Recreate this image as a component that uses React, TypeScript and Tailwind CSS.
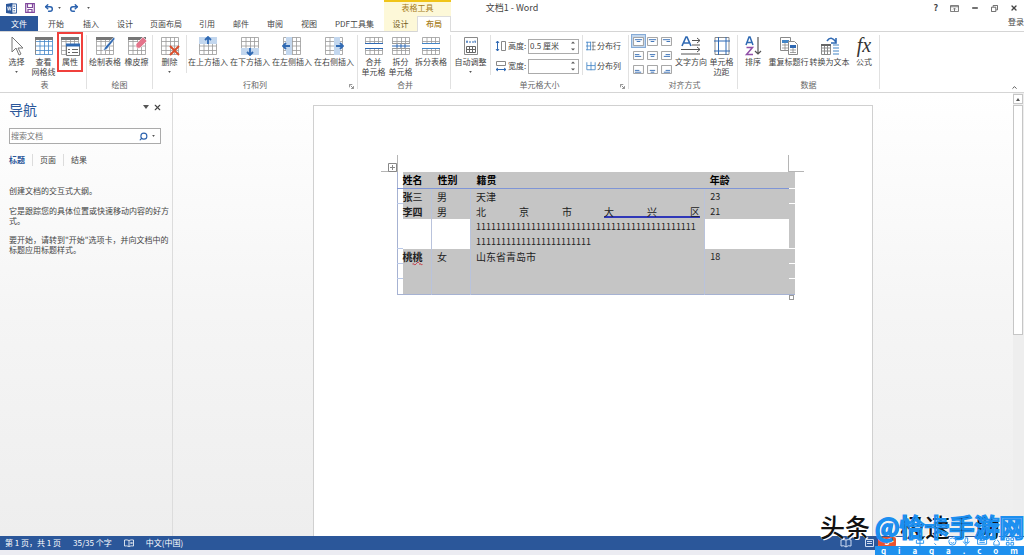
import React from 'react'
import { ChevronUp, Minus, Redo2, Search, Undo2, X } from 'lucide-react'

interface IconProps {
	children?: React.ReactNode
}

const Icon: React.FC<IconProps> = ({ children }) => (
	<svg viewBox="0 0 20 20" className="h-5 w-5 shrink-0" fill="none" stroke="#8a8a8a" aria-hidden="true">
		{children}
	</svg>
)

// Plain 4x4 table outline shared by most of the ribbon icons.
const Cells: React.FC<{ stroke?: string }> = ({ stroke = '#999' }) => (
	<path d="M1.5 1.5h17v17h-17zM1.5 5.5h17M1.5 10h17M1.5 14.5h17M6 1.5v17M10.5 1.5v17M14.5 1.5v17" stroke={stroke} strokeWidth=".8" />
)

const Header: React.FC = () => <path d="M1 1h18v3H1z" fill="#777" stroke="none" />

interface RibbonButtonProps {
	lines: string[]
	width: string
	icon: React.ReactNode
	menu?: boolean
	highlighted?: boolean
}

const RibbonButton: React.FC<RibbonButtonProps> = ({ lines, width, icon, menu, highlighted }) => (
	<button type="button" className={`relative flex h-[46px] flex-col items-center pt-px ${width}`}>
		{icon}
		<span className="mt-px text-[8px] leading-[10px] whitespace-nowrap">
			{lines.map((line) => (
				<span key={line} className="block">{line}</span>
			))}
		</span>
		{menu && <Caret className="mt-1" />}
		{highlighted && <span className="absolute -top-[3px] left-0 h-10 w-[26px] border-2 border-[#f0403c]" />}
	</button>
)

const Caret: React.FC<{ className?: string }> = ({ className = '' }) => (
	<svg viewBox="0 0 4 3" className={`h-[2px] w-[3px] shrink-0 ${className}`} aria-hidden="true">
		<path d="M0 0h4L2 3z" fill="#555" />
	</svg>
)

interface GroupProps {
	label: string
	width: string
	launcher?: boolean
	children: React.ReactNode
}

const Group: React.FC<GroupProps> = ({ label, width, launcher, children }) => (
	<section className={`relative my-[3px] flex shrink-0 flex-col border-r border-[#e1e1e1] ${width}`}>
		<div className="flex h-[45px] items-start">{children}</div>
		<h2 className="text-center text-[8px] leading-[10px] text-[#666]">{label}</h2>
		{launcher && (
			<svg viewBox="0 0 6 6" className="absolute right-[3px] bottom-0 h-[5px] w-[5px]" fill="none" stroke="#777" aria-hidden="true">
				<path d="M.5 4V.5H4M2 2l3 3M5.5 2.5v3h-3" />
			</svg>
		)}
	</section>
)

const Arrow: React.FC<{ d: string }> = ({ d }) => <path d={d} stroke="#2f69b3" strokeWidth="1.8" />

const alignments = [
	['M2 3h8M4 5h4', 'M2 3h8M4 5h4', 'M2 3h8M6 5h4'],
	['M2 4h5M2 6h7', 'M3 4h6M4 6h4', 'M5 4h5M3 6h7'],
	['M2 6h5M2 8h7', 'M3 6h6M4 8h4', 'M5 6h5M3 8h7'],
]

const DimensionField: React.FC<{ id: string; label: string; value: string; vertical?: boolean }> = ({ id, label, value, vertical }) => (
	<div className="flex h-5 items-center">
		<svg viewBox="0 0 12 12" className="mr-px h-3 w-3" fill="none" aria-hidden="true">
			{vertical ? (
				<>
					<path d="M2.5 1v10M1 3l1.5-2L4 3M1 9l1.5 2L4 9" stroke="#2f69b3" />
					<path d="M6.5 1.5h4v9h-4z" stroke="#888" />
				</>
			) : (
				<>
					<path d="M1 9.5h10M3 8L1 9.5 3 11M9 8l2 1.5L9 11" stroke="#2f69b3" />
					<path d="M1.5 1.5h9v4h-9z" stroke="#888" />
				</>
			)}
		</svg>
		<label htmlFor={id} className="w-5 text-[8px]">{label}</label>
		<div className="flex h-[15px] w-[51px] items-center border border-[#ababab] bg-white">
			<input id={id} defaultValue={value} className="min-w-0 flex-1 pl-px text-[8px] leading-3 outline-none" />
			<svg viewBox="0 0 4 10" className="mr-[3px] h-[10px] w-1" fill="#555" aria-hidden="true">
				<path d="M0 2.5L2 .5l2 2zM0 7.5l2 2 2-2z" />
			</svg>
		</div>
	</div>
)

const Ribbon: React.FC = () => (
	<div className="flex h-[62px] overflow-hidden border-y border-[#d5d5d5] bg-white">
		<Group label="表" width="w-[87px] pl-[3px]">
			<RibbonButton lines={['选择']} width="w-[27px]" menu icon={<Icon><path d="M5 1v15l4-4 3 7 2-1-3-6h5z" stroke="#777" /></Icon>} />
			<RibbonButton
				lines={['查看', '网格线']}
				width="w-[27px]"
				icon={<Icon><Cells stroke="#4385c6" /><path d="M1.5 18.5v-17h17" stroke="#888" /><path d="M1 1h18v3H1z" fill="#777" stroke="none" /></Icon>}
			/>
			<RibbonButton
				lines={['属性']}
				width="w-[26px]"
				highlighted
				icon={
					<Icon>
						<Cells /><Header />
						<path d="M6.5 8.5h13v11h-13z" fill="#fff" stroke="#777" />
						<path d="M6 7.5h14v3H6z" fill="#2f69b3" stroke="none" />
						<path d="M8 13.5h2M8 16.5h2M12 13.5h6M12 16.5h6" stroke="#666" />
					</Icon>
				}
			/>
		</Group>
		<Group label="绘图" width="w-[66px]">
			<RibbonButton
				lines={['绘制表格']}
				width="w-9"
				icon={<Icon><Cells /><Header /><path d="M19 1L10 11l-2 4 4-2 8-10z" fill="#2f69b3" stroke="#fff" strokeWidth=".6" /></Icon>}
			/>
			<RibbonButton
				lines={['橡皮擦']}
				width="w-[27px]"
				icon={<Icon><Cells /><Header /><path d="M9 8l7-7 4 4-7 7q-2 1-4-1z" fill="#e4748b" stroke="#fff" strokeWidth=".6" /></Icon>}
			/>
		</Group>
		<Group label="行和列" width="w-[205px]" launcher>
			<RibbonButton
				lines={['删除']}
				width="w-[33px]"
				menu
				icon={<Icon><Cells /><path d="M10 10l9 9M19 10l-9 9" stroke="#d9502e" strokeWidth="2" /></Icon>}
			/>
			<span className="h-[38px] border-l border-[#e1e1e1]" />
			<RibbonButton lines={['在上方插入']} width="w-[42px]" icon={<Icon><Cells /><path d="M1 1h18v7H1z" fill="#c3d7ee" stroke="none" /><Arrow d="M10 8V1M7 4l3-3 3 3" /></Icon>} />
			<RibbonButton lines={['在下方插入']} width="w-[42px]" icon={<Icon><Cells /><path d="M1 12h18v7H1z" fill="#c3d7ee" stroke="none" /><Arrow d="M10 12v7M7 16l3 3 3-3" /></Icon>} />
			<RibbonButton lines={['在左侧插入']} width="w-[42px]" icon={<Icon><Cells /><path d="M4 1h6v18H4z" fill="#c3d7ee" stroke="none" /><Arrow d="M8 10H1M4 7l-3 3 3 3" /></Icon>} />
			<RibbonButton lines={['在右侧插入']} width="w-[42px]" icon={<Icon><Cells /><path d="M10 1h6v18h-6z" fill="#c3d7ee" stroke="none" /><Arrow d="M12 10h7M16 7l3 3-3 3" /></Icon>} />
		</Group>
		<Group label="合并" width="w-[93px] pl-[2px]">
			<RibbonButton lines={['合并', '单元格']} width="w-[27px]" icon={<Icon><Cells /><path d="M0 7h20v6H0z" fill="#fff" stroke="none" /><path d="M1 7.5h18M1 12.5h18" stroke="#2f69b3" /></Icon>} />
			<RibbonButton lines={['拆分', '单元格']} width="w-[27px]" icon={<Icon><Cells /><path d="M1 7h18v6H1z" fill="#fff" stroke="none" /><path d="M1 7.5h18M1 12.5h18" stroke="#999" /><path d="M1 10h18M6 8v4M10 8v4M14 8v4" stroke="#2f69b3" /></Icon>} />
			<RibbonButton lines={['拆分表格']} width="w-[34px]" icon={<Icon><Cells /><path d="M0 8h20v4H0z" fill="#fff" stroke="none" /><path d="M1 7.5h18M1 12.5h18" stroke="#4385c6" /></Icon>} />
		</Group>
		<Group label="单元格大小" width="w-[178px]" launcher>
			<RibbonButton
				lines={['自动调整']}
				width="w-[39px]"
				menu
				icon={
					<Icon>
						<path d="M3.5 1.5h13v17h-13z" />
						<path d="M5 6h10M6 4.5v3M14 4.5v3" stroke="#2f69b3" strokeDasharray="2 1" />
						<path d="M5.5 10.5h9v6h-9zM5.5 13.5h9M8.5 10v6M11.5 10v6" stroke="#666" />
					</Icon>
				}
			/>
			<span className="h-10 border-l border-[#e1e1e1]" />
			<div className="ml-1 pt-px">
				<DimensionField id="row-height" label="高度:" value="0.5 厘米" vertical />
				<DimensionField id="column-width" label="宽度:" value="" />
			</div>
			<span className="ml-[3px] h-10 border-l border-[#e1e1e1]" />
			<div className="ml-[3px] pt-px">
				{['分布行', '分布列'].map((label) => (
					<button key={label} type="button" className="flex h-5 items-center gap-px text-[8px] whitespace-nowrap">
						<svg viewBox="0 0 12 12" className="h-[10px] w-[10px]" fill="none" stroke="#4385c6" aria-hidden="true">
							<path d={label === '分布行' ? 'M1.5 1v10M5.5 1v10M0 1.5h6M0 6h6M0 10.5h6' : 'M1 1.5v4h10v-4M6 1v10M1 5.5v5h10v-5'} />
							<path d="M8.5 1v10M7 1.5h4.5M7 6h4.5M7 10.5h4.5" stroke={label === '分布行' ? '#777' : 'none'} />
						</svg>
						{label}
					</button>
				))}
			</div>
		</Group>
		<Group label="对齐方式" width="w-[109px] pl-[3px]">
			<div className="grid w-[42px] grid-cols-3 gap-y-[2px]">
				{alignments.flat().map((d, index) => (
					<button
						key={index}
						type="button"
						aria-label={`对齐 ${index + 1}`}
						className={`flex h-3 w-[13px] items-center justify-center ${index === 0 ? 'bg-[#c3d7ee] outline outline-[#86abd6]' : ''}`}
					>
						<svg viewBox="0 0 12 10" className="h-[9px] w-[11px]" fill="#fff" aria-hidden="true">
							<path d="M.5.5h11v9H.5z" stroke="#999" />
							<path d={d} stroke="#2f69b3" />
						</svg>
					</button>
				))}
			</div>
			<RibbonButton
				lines={['文字方向']}
				width="w-[34px]"
				icon={
					<Icon>
						<path d="M1 10L5 1h1l4 9M3 7h5" stroke="#2f69b3" strokeWidth="1.6" />
						<path d="M11 4.5h8M11 9h8M0 13.5h19M0 18h19M16 2l3 2.5L16 7M16 11l3 2.5-3 2.5" stroke="#555" />
					</Icon>
				}
			/>
			<RibbonButton
				lines={['单元格', '边距']}
				width="w-[27px]"
				icon={<Icon><path d="M3 1.5h14v17H3z" /><path d="M6.5 1v18M14 1v18M2 5h16M2 15h16" stroke="#2f69b3" /></Icon>}
			/>
		</Group>
		<Group label="数据" width="w-[142px]">
			<RibbonButton
				lines={['排序']}
				width="w-[30px]"
				icon={
					<Icon>
						<path d="M3 9l3-8h1l3 8M4 6.5h5" stroke="#2f69b3" strokeWidth="1.5" />
						<path d="M3.5 11.5h6l-6 7h6.5" stroke="#9150a8" strokeWidth="1.5" />
						<path d="M15 1v17M12 15l3 3 3-3" stroke="#555" strokeWidth="1.2" />
					</Icon>
				}
			/>
			<RibbonButton
				lines={['重复标题行']}
				width="w-[41px]"
				icon={
					<Icon>
						<path d="M1.5 1.5h10v13h-10z" fill="#fff" />
						<path d="M3 4h7v3H3z" fill="#4385c6" stroke="none" />
						<path d="M3 9h6M3 12h6M6 7v7" strokeWidth=".8" />
						<path d="M9.5 5.5h6l3 3v10h-9z" fill="#fff" />
						<path d="M11 9h6v3h-6z" fill="#2f69b3" stroke="none" />
						<path d="M11 14h6M11 16.5h6M14 12v5" strokeWidth=".8" />
					</Icon>
				}
			/>
			<RibbonButton
				lines={['转换为文本']}
				width="w-[41px]"
				icon={
					<Icon>
						<path d="M1.5 8.5h9v10h-9zM1 12h10M1 15h10M4.5 9v9M7.5 9v9" />
						<path d="M1 8h10v2H1z" fill="#666" stroke="none" />
						<path d="M13 9h6M13 12h6M13 15h6M13 18h6" stroke="#4385c6" />
						<path d="M7 5q4-6 9 1M16 2v5h-5" stroke="#2f69b3" strokeWidth="1.6" />
					</Icon>
				}
			/>
			<RibbonButton
				lines={['公式']}
				width="w-[28px]"
				icon={<span className="h-5 font-['Liberation_Serif',serif] text-[20px] leading-[18px] text-[#333] italic">fx</span>}
			/>
		</Group>
		<button type="button" aria-label="折叠功能区" className="mr-[6px] mb-px ml-auto self-end">
			<ChevronUp className="h-[7px] w-[7px]" strokeWidth={3} />
		</button>
	</div>
)

const TitleBar: React.FC = () => (
	<header className="flex h-4 items-center text-[#444]">
		<div className="flex flex-1 items-center pl-[6px]">
			<svg viewBox="0 0 12 12" className="h-[11px] w-[11px]" aria-hidden="true">
				<path d="M5 1h6.5v10H5z" fill="#fff" stroke="#2b579a" />
				<path d="M0 1l7-1v12l-7-1z" fill="#2b579a" />
				<path d="M1.5 4l1 4 1-4 1 4 1-4" stroke="#fff" strokeWidth=".8" fill="none" />
				<path d="M8 3.5h2M8 6h2M8 8.5h2" stroke="#2b579a" />
			</svg>
			<button type="button" aria-label="保存" className="ml-2">
				<svg viewBox="0 0 10 10" className="h-[10px] w-[10px]" fill="none" stroke="#80479c" strokeWidth="1.2" aria-hidden="true">
					<path d="M.7.7h8.6v8.6H.7zM2.5 1v3.5h5V1M3 9V6.5h4V9" />
				</svg>
			</button>
			<button type="button" aria-label="撤消" className="ml-[9px] flex items-center gap-1">
				<Undo2 className="h-[10px] w-[10px] text-[#2b62ae]" strokeWidth={3.5} />
				<Caret />
			</button>
			<button type="button" aria-label="恢复" className="ml-2">
				<Redo2 className="h-[10px] w-[10px] text-[#2b62ae]" strokeWidth={3.5} />
			</button>
			<Caret className="ml-2" />
		</div>
		<h1 className="text-[9px]">文档1 - Word</h1>
		<div className="flex flex-1 items-center justify-end gap-3 pr-[6px]">
			<button type="button" aria-label="帮助" className="text-[9px] font-bold">?</button>
			<button type="button" aria-label="功能区显示选项">
				<svg viewBox="0 0 10 8" className="h-[7px] w-[9px]" fill="none" stroke="#666" aria-hidden="true">
					<path d="M.5.5h9v7h-9zM0 2h10M5 7V4M3.5 5L5 3.5 6.5 5" />
				</svg>
			</button>
			<button type="button" aria-label="最小化"><Minus className="h-[8px] w-[8px]" strokeWidth={4} /></button>
			<button type="button" aria-label="还原">
				<svg viewBox="0 0 8 8" className="h-[7px] w-[7px]" fill="none" stroke="#555" aria-hidden="true">
					<path d="M.5 2.5h5v5h-5zM2.5 2V.5h5v5H6" />
				</svg>
			</button>
			<button type="button" aria-label="关闭"><X className="h-[8px] w-[8px]" strokeWidth={4} /></button>
		</div>
	</header>
)

const tabs = [
	{ label: '开始', width: 'w-9' },
	{ label: '插入', width: 'w-[34px]' },
	{ label: '设计', width: 'w-[34px]' },
	{ label: '页面布局', width: 'w-[48px]' },
	{ label: '引用', width: 'w-[34px]' },
	{ label: '邮件', width: 'w-[34px]' },
	{ label: '审阅', width: 'w-[34px]' },
	{ label: '视图', width: 'w-[34px]' },
	{ label: 'PDF工具集', width: 'w-[58px] pr-px' },
]

const TabBar: React.FC = () => (
	<nav className="relative flex h-[15px] text-[8px] leading-[15px]">
		<button type="button" className="w-[38px] bg-[#2b579a] text-white">文件</button>
		{tabs.map((tab) => (
			<button key={tab.label} type="button" className={`whitespace-nowrap ${tab.width}`}>{tab.label}</button>
		))}
		<div className="relative flex w-[67px] bg-[#fdf8d8]">
			<span className="absolute inset-x-0 -top-4 h-4 border-t-2 border-[#f0c419] bg-[#fdf8d8] text-center leading-[12px] text-[#a67c17]">
				表格工具
			</span>
			<button type="button" className="w-[33px] text-[#725a1c]">设计</button>
			<button type="button" className="relative -mb-px flex h-4 w-[34px] justify-center border-x border-t border-[#dcdcdc] bg-white leading-[13px] font-medium text-[#a67c17]">布局</button>
		</div>
		<a href="#login" className="ml-auto leading-3">登录</a>
	</nav>
)

const NavigationPane: React.FC = () => (
	<aside className="w-[173px] shrink-0 border-r border-[#dcdcdc] pt-2 pr-[11px] pl-[9px] text-[8px] text-[#444]">
		<div className="flex h-4 items-start">
			<h2 className="flex-1 text-[14px] leading-[16px] text-[#2b579a]">导航</h2>
			<button type="button" aria-label="任务窗格选项" className="mt-1 mr-1">
				<svg viewBox="0 0 6 4" className="h-1 w-[6px]" aria-hidden="true"><path d="M0 0h6L3 4z" fill="#555" /></svg>
			</button>
			<button type="button" aria-label="关闭导航" className="-mr-px"><X className="mt-[2px] h-[9px] w-[9px]" strokeWidth={3} /></button>
		</div>
		<div className="mt-[11px] flex h-4 items-center border border-[#ababab] bg-white pr-px">
			<input aria-label="搜索文档" placeholder="搜索文档" className="min-w-0 flex-1 pl-px leading-3 outline-none placeholder:text-[#777]" />
			<Search className="h-[9px] w-[9px] -scale-x-100 text-[#2b62ae]" strokeWidth={3} />
			<Caret className="mx-1" />
		</div>
		<div className="mt-[10px] flex h-3 items-center">
			<button type="button" className="pr-[7px] font-bold text-[#2b579a]">标题</button>
			<button type="button" className="border-l border-[#dcdcdc] px-[7px]">页面</button>
			<button type="button" className="border-l border-[#dcdcdc] px-[7px]">结果</button>
		</div>
		<p className="mt-5 leading-[10px]">创建文档的交互式大纲。</p>
		<p className="-mr-[10px] mt-[10px] leading-[10px]">它是跟踪您的具体位置或快速移动内容的好方<br />式。</p>
		<p className="-mr-[10px] mt-[9px] leading-[10px]">要开始，请转到"开始"选项卡，并向文档中的<br />标题应用标题样式。</p>
	</aside>
)

interface Person {
	name: React.ReactNode
	gender: string
	origin: React.ReactNode
	age: string
}

const longOrigin = (
	<>
		<div className="flex h-[15px] w-56 justify-between">
			<span className="flex gap-[33px]"><span>北</span><span>京</span><span>市</span></span>
			<span className="flex h-[14px] gap-[33px] border-b-2 border-[#3038b8]"><span>大</span><span>兴</span><span>区</span></span>
		</div>
		<div className="text-[9px]">{'1'.repeat(44)}</div>
		<div className="text-[9px]">{'1'.repeat(23)}</div>
	</>
)

const people: Person[] = [
	{ name: <><b>张</b>三</>, gender: '男', origin: '天津', age: '23' },
	{ name: <b>李四</b>, gender: '男', origin: longOrigin, age: '21' },
	{ name: <b>桃<u className="decoration-[#c22f3d] decoration-wavy decoration-1 underline-offset-0">桃</u></b>, gender: '女', origin: '山东省青岛市', age: '18' },
	{ name: '', gender: '', origin: '', age: '' },
	{ name: '', gender: '', origin: '', age: '' },
]

const cell = 'h-[15px] bg-[#c5c5c5] pl-[5px]'

const PeopleTable: React.FC = () => (
	<div className="relative mt-[66px] ml-[83px] w-[398px]">
		<span className="absolute -top-[17px] left-0 h-[17px] border-l border-[#b5b5b5]" />
		<span className="absolute -top-px -left-4 w-4 border-t border-[#b5b5b5]" />
		<svg viewBox="0 0 9 9" className="absolute -top-[9px] -left-[9px] h-[9px] w-[9px]" fill="#fff" stroke="#888" aria-hidden="true">
			<path d="M.5.5h8v8h-8zM4.5 2v5M2 4.5h5" />
		</svg>
		<span className="absolute -top-[17px] left-[391px] h-[17px] border-l border-[#b5b5b5]" />
		<span className="absolute -top-px left-[391px] w-4 border-t border-[#b5b5b5]" />
		<table className="w-full table-fixed border-b border-l border-[#a6b2d2] text-left text-[10px] leading-[15px] text-[#222]">
			<colgroup>
				<col className="w-[5px]" />
				<col className="w-[29px]" />
				<col className="w-[39px]" />
				<col className="w-[234px]" />
				<col className="w-[84px]" />
				<col className="w-[6px]" />
			</colgroup>
			<thead>
				<tr className="h-4 bg-[#c5c5c5] text-black">
					<th className="border-b border-[#7f95d6] bg-white" />
					<th className="border-b border-[#7f95d6] p-0 font-bold">姓名</th>
					<th className="border-b border-[#7f95d6] p-0 pl-[6px] font-bold">性别</th>
					<th className="border-b border-[#7f95d6] p-0 pl-[6px] font-bold">籍贯</th>
					<th className="border-b border-[#7f95d6] p-0 pl-[5px] font-bold">年龄</th>
					<th className="border-b border-white" />
				</tr>
			</thead>
			<tbody>
				{people.map((person, index) => (
					<tr key={index} className="align-top">
						<td className="border-t border-[#b9c8e8]" />
						<td className="p-0"><div className="h-[15px] bg-[#c5c5c5]">{person.name}</div></td>
						<td className="border-l border-[#b9c3dc] p-0"><div className={cell}>{person.gender}</div></td>
						<td className="border-l border-[#b9c3dc] bg-[#c5c5c5] p-0 pl-[5px]">{person.origin}</td>
						<td className="border-l border-[#b9c3dc] p-0"><div className={`${cell} text-[9px]`}>{person.age}</div></td>
						<td className="border-t border-white bg-[#c5c5c5]" />
					</tr>
				))}
			</tbody>
		</table>
		<span className="absolute top-full left-[392px] h-[5px] w-[5px] border border-[#999] bg-white" />
	</div>
)

const StatusBar: React.FC = () => (
	<footer className="border-b-[5px] border-[#ececf2]">
		<div className="flex h-[14px] items-center gap-3 bg-[#2b579a] pl-[5px] text-[8px] text-white">
			<span>第 1 页，共 1 页</span>
			<span>35/35 个字</span>
			<svg viewBox="0 0 10 8" className="h-2 w-[10px]" fill="none" stroke="#fff" aria-hidden="true">
				<path d="M5 1.5v6M5 1.5Q3 .5.5 1v6q2-.5 4.5.5M5 1.5Q7 .5 9.5 1v6Q7 6.5 5 7.5M6.5 3l2 2M8.5 3l-2 2" strokeWidth=".8" />
			</svg>
			<span>中文(中国)</span>
			<svg viewBox="0 0 40 10" className="mr-[145px] ml-auto h-[10px] w-10" fill="none" stroke="#cfdcf2" aria-hidden="true">
				<path d="M7 2v7M7 2Q4 1 2 2v6q3-1 5 1M7 2q3-1 5 0v6q-3-1-5 1" />
				<path d="M26.5 1.5h8v7h-8zM28 3.5h5M28 5.5h5" />
			</svg>
		</div>
	</footer>
)

const Watermark: React.FC = () => (
	<div className="pointer-events-none absolute right-0 bottom-0 h-[46px] w-[206px] overflow-hidden whitespace-nowrap">
		{/* input method strip sitting over the status bar */}
		<div className="absolute right-0 bottom-[9px] flex h-[9px] w-[146px] items-center justify-between bg-white pr-1 text-[#1c8ff0]">
			<span className="flex h-[10px] w-[18px] items-center justify-center rounded-xs bg-[#e9532f] text-[8px] font-bold text-white">S</span>
			<svg viewBox="0 0 110 10" className="h-[9px] w-[110px]" fill="none" stroke="currentColor" aria-hidden="true">
				<path d="M1 3h8v4H1zM5 0v10M22 2v1M21 7l2 2M37 5a4 4 0 1 0 8 0 4 4 0 1 0-8 0M39 6q2 2 4 0M55 1v5h3V1zM53 5q3 6 7 0M56 8v2M69 2h10v6H69zM71 4h6M71 6h6M87 9V6l3-4 3 4v3zM101 1h3v3h-3zM106 1h3v3h-3zM101 6h3v3h-3zM106 6h3v3h-3z" />
			</svg>
		</div>
		<p className="absolute top-0 left-[2px] text-[25px] leading-[34px] font-medium text-[#111] [text-shadow:1px_1px_0_#fff,-1px_-1px_0_#fff]">
			头条 @极速手助
		</p>
		<p className="absolute top-0 left-[57px] text-[25px] leading-[34px] font-medium text-transparent [-webkit-text-stroke:2px_#1c8ff0]">
			@恰卡手游网
		</p>
		<div className="absolute right-0 bottom-0 flex h-[9px] w-[149px] items-center justify-between bg-[#1e90ee] px-[6px] text-[8px] font-bold text-white">
			{'qiaqa.com'.split('').map((letter, index) => (
				<span key={index}>{letter}</span>
			))}
		</div>
	</div>
)

export default function App() {
	return (
		<div className="relative flex h-screen flex-col overflow-hidden bg-white font-['Noto_Sans_CJK_SC',sans-serif] text-[#444]">
			<TitleBar />
			<TabBar />
			<Ribbon />
			<main className="flex min-h-0 flex-1 bg-linear-to-b from-white via-[#f5f5f5] to-[#eeeeee]">
				<NavigationPane />
				<div className="min-w-0 flex-1 overflow-hidden pt-3">
					<article className="mx-auto h-full w-2/3 border border-b-0 border-[#d0d0d0] bg-white">
						<PeopleTable />
					</article>
				</div>
				<div className="flex w-[11px] shrink-0 flex-col bg-[#eeeeee] pt-px pr-px">
					<button type="button" aria-label="向上滚动" className="flex h-[10px] items-center justify-center border border-[#c6c6c6] bg-white">
						<svg viewBox="0 0 4 3" className="h-[3px] w-1" aria-hidden="true"><path d="M2 0l2 3H0z" fill="#555" /></svg>
					</button>
					<span className="mt-px h-[52%] border border-[#c6c6c6] bg-white" />
				</div>
			</main>
			<StatusBar />
			<Watermark />
		</div>
	)
}
